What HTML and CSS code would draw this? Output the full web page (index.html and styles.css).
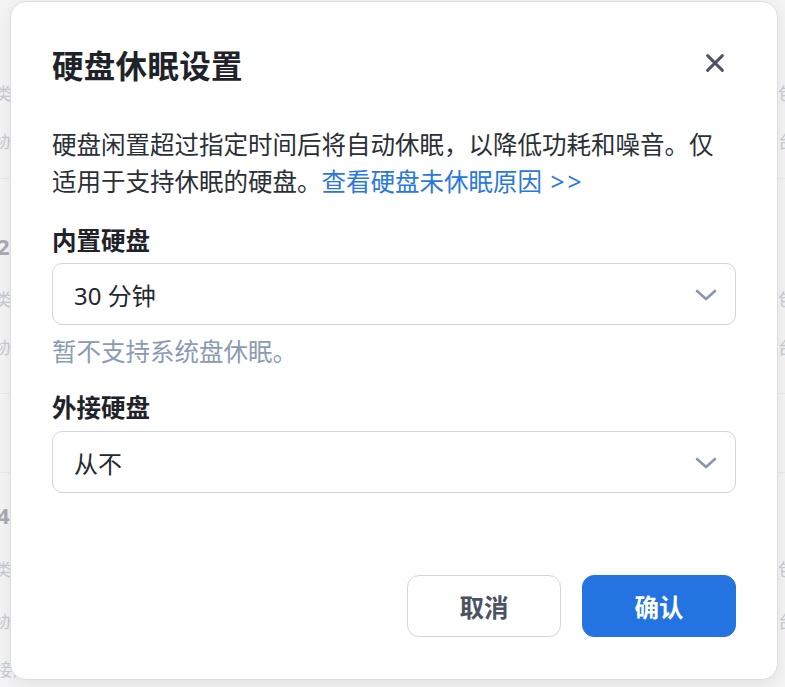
FILE: index.html
```html
<!DOCTYPE html>
<html lang="zh-CN">
<head>
<meta charset="utf-8">
<title>硬盘休眠设置</title>
<link rel="stylesheet" href="styles.css">
</head>
<body>
<div class="bg">
  <div class="bg-row"><span class="bg-l">类型</span><span class="bg-r">包含</span></div>
  <div class="bg-row"><span class="bg-l">协议</span><span class="bg-r">台式</span></div>
  <div class="bg-div d1"></div>
  <div class="bg-row head h2"><span class="bg-l num">2</span><span class="bg-r"></span></div>
  <div class="bg-row r2"><span class="bg-l">类型</span><span class="bg-r">包含</span></div>
  <div class="bg-row"><span class="bg-l">协议</span><span class="bg-r">台式</span></div>
  <div class="bg-div d2"></div>
  <div class="bg-div d3"></div>
  <div class="bg-row head h4"><span class="bg-l num">4</span><span class="bg-r"></span></div>
  <div class="bg-row r4"><span class="bg-l">类型</span><span class="bg-r">包含</span></div>
  <div class="bg-row r5"><span class="bg-l">协议</span><span class="bg-r">台式</span></div>
  <div class="bg-row"><span class="bg-l">接口</span><span class="bg-r"></span></div>
</div>

<div class="modal">
  <div class="modal-header">
    <h1 class="modal-title">硬盘休眠设置</h1>
    <button class="close-btn" aria-label="关闭">
      <svg width="20" height="20" viewBox="0 0 20 20"><path d="M2.6 2.6 L17.4 17.4 M17.4 2.6 L2.6 17.4" stroke="#4a5466" stroke-width="2.9" stroke-linecap="round" fill="none"/></svg>
    </button>
  </div>
  <p class="desc">硬盘闲置超过指定时间后将自动休眠，以降低功耗和噪音。仅适用于支持休眠的硬盘。<a class="link" href="#">查看硬盘未休眠原因 <span class="arrows">&gt;&gt;</span></a></p>

  <div class="field f1">
    <div class="label">内置硬盘</div>
    <div class="select">
      <span class="select-value">30 分钟</span>
      <svg class="chev" width="22" height="12" viewBox="0 0 22 12"><polyline points="2,2 11,10 20,2" stroke="#8a98ae" stroke-width="2.6" stroke-linecap="round" stroke-linejoin="round" fill="none"/></svg>
    </div>
    <div class="hint">暂不支持系统盘休眠。</div>
  </div>

  <div class="field f2">
    <div class="label">外接硬盘</div>
    <div class="select">
      <span class="select-value">从不</span>
      <svg class="chev" width="22" height="12" viewBox="0 0 22 12"><polyline points="2,2 11,10 20,2" stroke="#8a98ae" stroke-width="2.6" stroke-linecap="round" stroke-linejoin="round" fill="none"/></svg>
    </div>
  </div>

  <div class="footer">
    <button class="btn btn-cancel">取消</button>
    <button class="btn btn-ok">确认</button>
  </div>
</div>
</body>
</html>
```

FILE: styles.css
```css
* { box-sizing: border-box; }

html, body {
  margin: 0;
  padding: 0;
}

body {
  width: 785px;
  height: 687px;
  overflow: hidden;
  position: relative;
  background: #f3f3f4;
  font-family: "Noto Sans", "Noto Sans CJK SC", sans-serif;
}

/* background page (dimmed, mostly covered) */
.bg {
  padding-top: 68px;
  width: 785px;
}

.bg-row {
  height: 48px;
  display: flex;
  justify-content: space-between;
  align-items: center;
  font-size: 17px;
  color: #c6cad2;
  white-space: nowrap;
}

.bg-l {
  margin-left: -5px;
  width: 60px;
}

.bg-r {
  width: 60px;
  margin-right: -53px;
}

.bg-row.head { font-size: 22px; font-weight: 700; }
.bg-l.num { color: #a9abb0; margin-left: -3px; }

.bg-row.h2 { margin-top: 43px; }
.bg-row.r2 { margin-top: 4px; }
.bg-row.h4 { margin-top: 18px; }
.bg-row.r4 { margin-top: 5px; }
.bg-row.r5 { margin-top: 4px; }

.bg-div {
  height: 1px;
  background: #e7e8eb;
}
.bg-div.d1 { margin-top: 14px; }
.bg-div.d2 { margin-top: 23px; }
.bg-div.d3 { margin-top: 78px; }

/* modal */
.modal {
  position: absolute;
  left: 10px;
  top: 1px;
  width: 768px;
  height: 679px;
  background: #ffffff;
  border: 1px solid #dcdee2;
  border-radius: 16px;
  box-shadow: 0 4px 14px rgba(0, 0, 0, 0.07);
  padding: 44px 41px 42px;
  display: flex;
  flex-direction: column;
}

.modal-header {
  display: flex;
  align-items: center;
  justify-content: space-between;
  height: 40px;
}

.modal-title {
  margin: 0;
  font-size: 31.5px;
  line-height: 40px;
  font-weight: 700;
  color: #1f2329;
  letter-spacing: 0.3px;
}

.close-btn {
  width: 42px;
  height: 42px;
  margin-bottom: 6px;
  padding: 0;
  border: none;
  background: transparent;
  display: flex;
  align-items: center;
  justify-content: center;
}

.desc {
  margin: 40px 0 0;
  font-size: 24.5px;
  line-height: 37px;
  color: #2b2f36;
}

.link {
  color: #2a78de;
  text-decoration: none;
}

.arrows {
  letter-spacing: 3px;
  margin-left: 2px;
}

.field.f1 { margin-top: 24px; }
.field.f2 { margin-top: 22px; }

.label {
  font-size: 24.5px;
  line-height: 34px;
  font-weight: 700;
  color: #1f2329;
}

.select {
  margin-top: 5px;
  height: 62px;
  border: 1px solid #cfd6e0;
  border-radius: 10px;
  display: flex;
  align-items: center;
  justify-content: space-between;
  padding: 0 18px 0 21px;
  font-size: 24px;
  color: #23272e;
}

.f2 .select { margin-top: 6px; }

.chev { display: block; margin-top: 2px; }

.hint {
  margin-top: 10px;
  font-size: 24.5px;
  line-height: 34px;
  color: #8c9bb2;
}

.footer {
  margin-top: auto;
  display: flex;
  justify-content: flex-end;
  gap: 21px;
}

.btn {
  width: 154px;
  height: 62px;
  border-radius: 12px;
  font-family: "Noto Sans", "Noto Sans CJK SC", sans-serif;
  font-size: 24.5px;
  font-weight: 700;
  padding: 0;
}

.btn-cancel {
  background: #ffffff;
  border: 1px solid #cfd7e2;
  color: #4a5263;
}

.btn-ok {
  background: #2374e1;
  border: 1px solid #2374e1;
  color: #ffffff;
}
```
